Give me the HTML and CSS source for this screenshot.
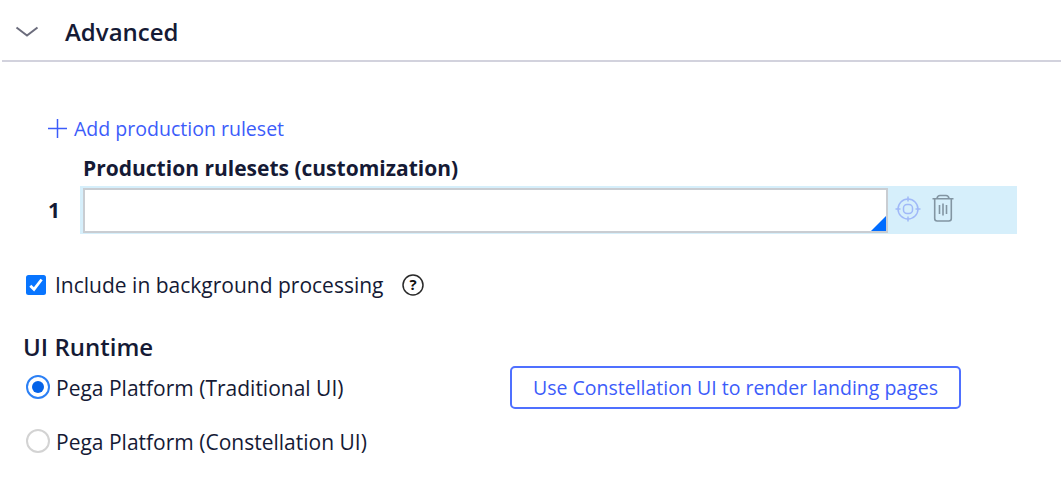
FILE: index.html
```
<!DOCTYPE html>
<html lang="en">
<head>
  <meta charset="UTF-8">
  <meta name="viewport" content="width=device-width, initial-scale=1.0">
  <title>Advanced</title>
  <link rel="stylesheet" href="styles.css">
</head>
<body>
  <div class="section-header">
    <svg class="chevron" width="24" height="12" viewBox="0 0 24 12"><path d="M1.5 1.5L12 9.500L22.500 1.500"/></svg>
    <h2>Advanced</h2>
  </div>

  <div class="rulesets">
    <a class="add-link">
      <svg width="20" height="20" viewBox="0 0 20 20"><path d="M10.500 1v19M1 10.500h19"/></svg>
      <span class="add-text">Add production ruleset</span>
    </a>
    <div class="ruleset-label"><span>Production rulesets (customization)</span></div>
    <div class="ruleset-row">
      <div class="row-number">1</div>
      <div class="row-content">
        <div class="ruleset-input"><div class="corner"></div></div>
        <svg class="target" width="26" height="26" viewBox="0 0 26 26">
          <circle cx="13" cy="13" r="10"/>
          <rect x="8.500" y="8.500" width="9" height="9" rx="3.500"/>
          <path d="M13 .5v5M13 20.500v5M.5 13h5M20.500 13h5"/>
        </svg>
        <svg class="trash" width="22" height="28" viewBox="0 0 22 28">
          <path d="M.5 4.700h21M5 4.500q.5-3 3-3h6q2.500 0 3 3M2.700 5v19.500q0 2.500 2.500 2.500h11.600q2.500 0 2.500-2.500V5"/>
          <path d="M7.500 11v9M11 9.500v12M14.500 11v9"/>
        </svg>
      </div>
    </div>
  </div>

  <div class="background-option">
    <svg class="checkbox" width="20" height="20" viewBox="0 0 20 20">
      <rect width="20" height="20" rx="2.500"/>
      <path d="M4.300 10.700L8 14.300L15.600 4.500"/>
    </svg>
    <span class="background-label">Include in background processing</span>
    <svg class="help" width="22" height="22" viewBox="0 0 22 22">
      <circle cx="11" cy="11" r="10"/>
      <text x="11" y="16.300">?</text>
    </svg>
  </div>

  <h3>UI Runtime</h3>
  <div class="option-row">
    <div class="radio checked"></div>
    <span class="option-label traditional">Pega Platform (Traditional UI)</span>
    <button class="landing-btn">Use Constellation UI to render landing pages</button>
  </div>
  <div class="option-row">
    <div class="radio"></div>
    <span class="option-label">Pega Platform (Constellation UI)</span>
  </div>
</body>
</html>
```
FILE: styles.css
```
* {
  margin: 0;
  padding: 0;
  box-sizing: border-box;
}

body {
  font-family: 'Open Sans', sans-serif;
  font-size: 21px;
  color: #151a35;
  background: #fff;
  overflow: hidden;
}

svg {
  display: block;
  flex-shrink: 0;
  fill: none;
}

.section-header {
  display: flex;
  align-items: center;
  height: 62px;
  margin: 0 3px 0 2px;
  padding: 2px 0 0 13px;
  border-bottom: 2px solid #d2d2dd;
}

.section-header h2 {
  margin-left: 26px;
  font-size: 24px;
  font-weight: 600;
}

.chevron {
  margin-top: 2px;
  stroke: #6b6c7c;
  stroke-width: 2;
}

.rulesets {
  padding: 52px 0 0 47px;
}

.add-link {
  display: flex;
  align-items: center;
  height: 28px;
  color: #3c5cfa;
  font-size: 19.55px;
}

.add-link svg {
  stroke: #3c5cfa;
  stroke-width: 1.5;
}

.add-text {
  margin-left: 7px;
}

.ruleset-label {
  height: 44px;
  padding-left: 36px;
  line-height: 52px;
  font-weight: 700;
}

.ruleset-row {
  display: flex;
  height: 48px;
}

.row-number {
  width: 33px;
  padding-left: 1px;
  line-height: 48px;
  font-weight: 700;
}

.row-content {
  display: flex;
  width: 937px;
  padding: 2px 0 1px 3px;
  background-color: #d6effb;
}

.ruleset-input {
  display: flex;
  align-items: flex-end;
  justify-content: flex-end;
  width: 805px;
  border: 2px solid #c9cdd2;
  background-color: #fff;
}

.corner {
  width: 15px;
  height: 15px;
  background-color: #006cff;
  clip-path: polygon(100% 0, 100% 100%, 0 100%);
}

.target {
  margin: 8px 0 0 7px;
  stroke: #a0b9f8;
  stroke-width: 1.5;
}

.trash {
  margin: 6px 0 0 11px;
  stroke: #8295a2;
  stroke-width: 1.6;
}

.background-option {
  display: flex;
  align-items: center;
  height: 28px;
  margin: 37px 0 0 26px;
}

.checkbox rect {
  fill: #0875ff;
}

.checkbox path {
  stroke: #fff;
  stroke-width: 2.8;
}

.background-label {
  margin-left: 9px;
}

.help {
  margin: -1px 0 0 18px;
}

.help circle {
  stroke: #292929;
  stroke-width: 1.5;
}

.help text {
  fill: #111;
  font-size: 15px;
  font-weight: 700;
  text-anchor: middle;
}

h3 {
  height: 32px;
  margin: 32px 0 0 23px;
  font-size: 24px;
  font-weight: 600;
  line-height: 32px;
}

.option-row {
  display: flex;
  align-items: center;
  height: 54px;
  margin-left: 26px;
}

h3 + .option-row {
  margin-top: -3px;
}

.radio {
  display: flex;
  align-items: center;
  justify-content: center;
  width: 24px;
  height: 24px;
  border: 2px solid #d3d3d3;
  border-radius: 50%;
}

.radio.checked {
  border-color: #2c80f5;
}

.radio.checked::before {
  content: "";
  width: 12px;
  height: 12px;
  border-radius: 50%;
  background-color: #0563e8;
}

.option-label {
  margin-left: 6px;
  padding-top: 1px;
}

.option-label.traditional {
  width: 454px;
}

.landing-btn {
  width: 451px;
  height: 43px;
  border: 2px solid #4f70ff;
  border-radius: 5px;
  background: #fff;
  color: #3c5cfa;
  font-family: inherit;
  font-size: 19.5px;
  white-space: nowrap;
}
```
